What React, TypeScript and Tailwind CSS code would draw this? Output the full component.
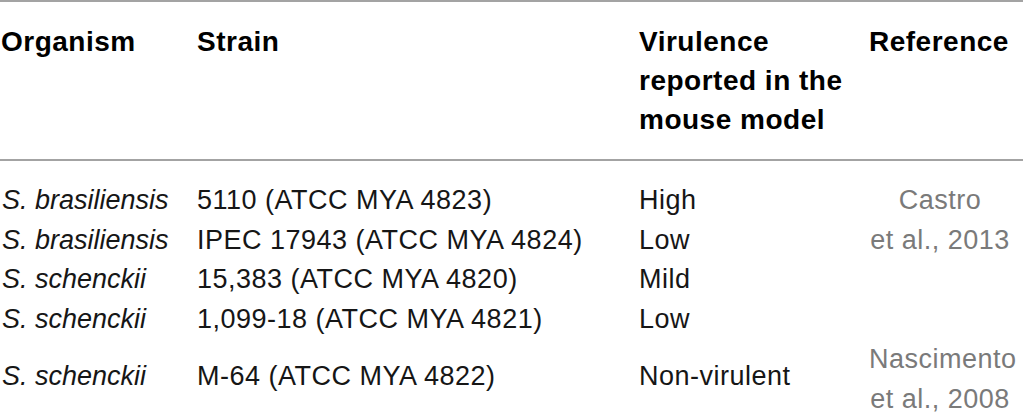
const rows = [
  { organism: "S. brasiliensis", strain: "5110 (ATCC MYA 4823)", virulence: "High" },
  { organism: "S. brasiliensis", strain: "IPEC 17943 (ATCC MYA 4824)", virulence: "Low" },
  { organism: "S. schenckii", strain: "15,383 (ATCC MYA 4820)", virulence: "Mild" },
  { organism: "S. schenckii", strain: "1,099-18 (ATCC MYA 4821)", virulence: "Low" },
];

export default function App() {
  return (
    <div className="h-[413px] w-[1023px] overflow-hidden bg-white font-['Liberation_Sans',Arial,sans-serif] text-[#161616]">
      <div className="border-t-2 border-[#a3a3a3]" />
      <div className="grid grid-cols-[197px_442px_230px_142px] pt-[20px] pb-[20px] text-[28px] font-bold leading-[39px] tracking-[0.5px] text-black">
        <div className="pl-[1px]">Organism</div>
        <div>Strain</div>
        <div>
          Virulence
          <br />
          reported in the
          <br />
          mouse model
        </div>
        <div>Reference</div>
      </div>
      <div className="border-t-2 border-[#a3a3a3]" />
      <div className="grid grid-cols-[197px_442px_230px_142px] pt-[20px] text-[27px] leading-[39.7px] tracking-[0.5px]">
        {rows.map((r, i) => (
          <div key={i} className="contents">
            <div className="pl-[2px] italic tracking-normal">{r.organism}</div>
            <div>{r.strain}</div>
            <div>{r.virulence}</div>
            {i === 0 && (
              <div className="row-span-2 text-center text-[#7a7a7a]">
                Castro
                <br />
                et al., 2013
              </div>
            )}
            {i >= 2 && <div />}
          </div>
        ))}
        <div className="flex items-center pb-[6px] pl-[2px] italic tracking-normal">S. schenckii</div>
        <div className="flex items-center pb-[6px]">M-64 (ATCC MYA 4822)</div>
        <div className="flex items-center pb-[6px]">Non-virulent</div>
        <div className="text-center text-[#7a7a7a]">
          Nascimento
          <br />
          et al., 2008
        </div>
      </div>
    </div>
  );
}
